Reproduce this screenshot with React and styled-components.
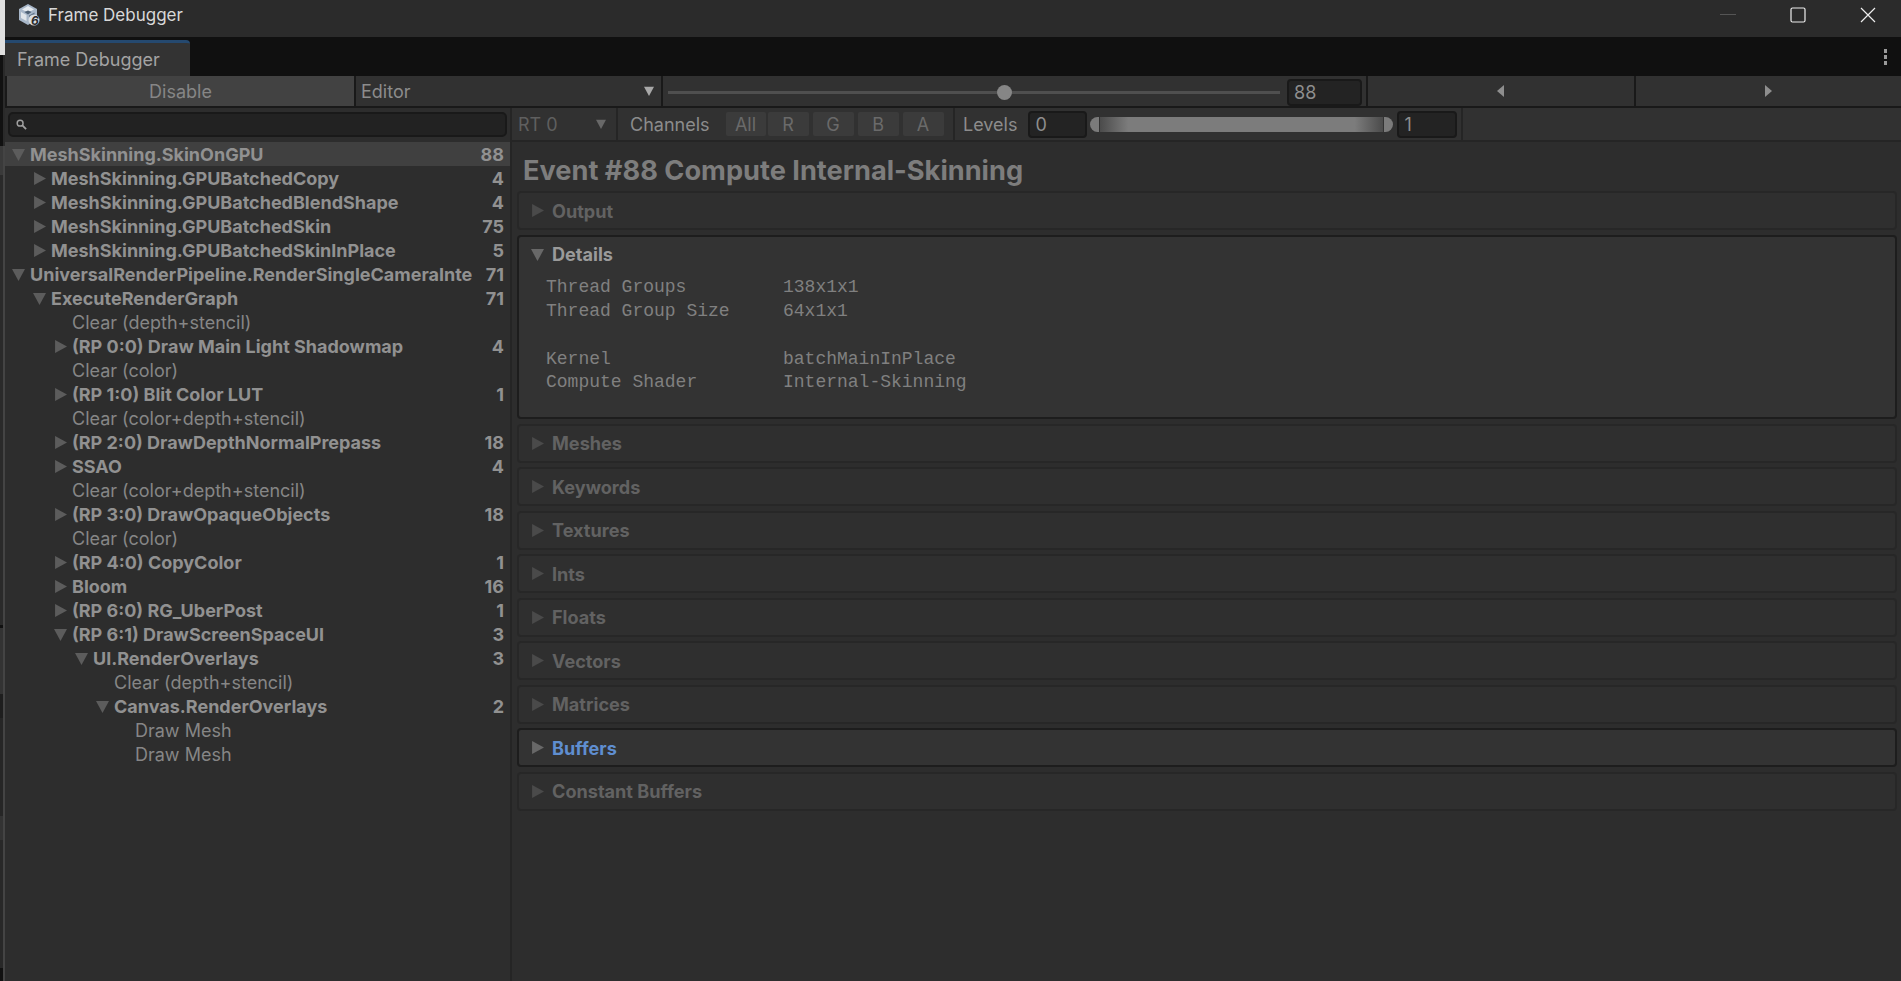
import React from 'react';
import styled, { createGlobalStyle } from 'styled-components';

const GlobalStyle = createGlobalStyle`
  html, body { margin: 0; padding: 0; background: #2d2d2d; }
  body { font-family: 'Inter', 'Liberation Sans', sans-serif; overflow: hidden; }
  * { box-sizing: border-box; }
`;

const Page = styled.div`
  width: 1901px;
  height: 981px;
  display: flex;
  overflow: hidden;
`;

const Gutter = styled.div`
  width: 5px;
  flex: none;
  display: flex;
  flex-direction: column;
`;

const GutterPatch = styled.div`
  height: ${p => p.$h}px;
  background: ${p => p.$c};
  border-right: 2px solid ${p => p.$edge || '#444444'};
`;

const Window = styled.div`
  flex: 1;
  display: flex;
  flex-direction: column;
  min-width: 0;
  background: #2d2d2d;
`;

const TitleBar = styled.div`
  height: 37px;
  flex: none;
  display: flex;
  align-items: center;
  padding: 0 0 7px 13px;
  background: #2b2b2b;
  color: #d8d8d8;
  font-size: 17px;
`;

const TitleText = styled.span`
  margin-left: 8px;
`;

const WinButtons = styled.div`
  margin-left: auto;
  display: flex;
  align-items: center;
  gap: 4px;
  height: 100%;
`;

const WinButton = styled.div`
  width: 66px;
  height: 100%;
  display: flex;
  align-items: center;
  justify-content: center;
`;

const TabBar = styled.div`
  height: 39px;
  flex: none;
  display: flex;
  align-items: flex-end;
  background: #101010;
`;

const Tab = styled.div`
  width: 185px;
  height: 36px;
  padding-left: 12px;
  display: flex;
  align-items: center;
  background: #333333;
  border-top: 3px solid #25496f;
  border-top-right-radius: 4px;
  color: #a3a3a3;
  font-size: 18px;
`;

const MenuDots = styled.div`
  margin: 0 14px 11px auto;
  display: flex;
  flex-direction: column;
  gap: 2px;
`;

const Dot = styled.span`
  width: 3px;
  height: 4px;
  background: #9a9a9a;
`;

const Toolbar = styled.div`
  height: 32px;
  flex: none;
  display: flex;
  background: #191919;
  padding-bottom: 2px;
`;

const DisableButton = styled.div`
  width: 347px;
  margin-left: 2px;
  display: flex;
  align-items: center;
  justify-content: center;
  background: #424242;
  color: #868686;
  font-size: 18px;
`;

const EditorSelect = styled.div`
  width: 305px;
  margin-left: 2px;
  padding: 0 7px 0 5px;
  display: flex;
  align-items: center;
  justify-content: space-between;
  background: #313131;
  color: #8c8c8c;
  font-size: 18px;
`;

const SliderCell = styled.div`
  width: 703px;
  margin-left: 2px;
  padding: 3px 4px 0 5px;
  display: flex;
  align-items: center;
  background: #313131;
`;

const Track = styled.div`
  flex: 1;
  height: 3px;
  position: relative;
  background: #4f4f4f;
`;

const Thumb = styled.div`
  position: absolute;
  top: -6px;
  left: 329px;
  width: 15px;
  height: 15px;
  border-radius: 50%;
  background: #868686;
`;

const NumberField = styled.div`
  width: ${p => p.$w}px;
  height: 27px;
  margin-left: ${p => p.$ml || 0}px;
  padding-left: 5px;
  flex: none;
  display: flex;
  align-items: center;
  background: #232323;
  border: 2px solid #191919;
  border-radius: 4px;
  color: #8e8e8e;
  font-size: 18px;
`;

const StepButton = styled.div`
  flex: ${p => (p.$w ? 'none' : 1)};
  width: ${p => (p.$w ? `${p.$w}px` : 'auto')};
  margin-left: 2px;
  display: flex;
  align-items: center;
  justify-content: center;
  background: #313131;
`;

const Body = styled.div`
  flex: 1;
  display: flex;
  min-height: 0;
`;

const LeftPane = styled.div`
  width: 507px;
  flex: none;
  display: flex;
  flex-direction: column;
  border-right: 2px solid #252525;
`;

const SearchRow = styled.div`
  height: 34px;
  flex: none;
  padding: 4px 3px 5px 3px;
`;

const SearchBox = styled.div`
  height: 100%;
  padding-left: 6px;
  display: flex;
  align-items: center;
  background: #222222;
  border: 2px solid #191919;
  border-radius: 5px;
`;

const TreeList = styled.div`
  display: flex;
  flex-direction: column;
`;

const TreeRow = styled.div`
  height: 24px;
  padding-left: ${p => 7 + p.$depth * 21}px;
  padding-right: 6px;
  display: flex;
  align-items: center;
  background: ${p => (p.$selected ? '#404040' : 'transparent')};
  color: ${p => (p.$group ? '#919191' : '#868686')};
  font-size: 18px;
  font-weight: ${p => (p.$group ? 700 : 400)};
  white-space: nowrap;
`;

const ArrowSlot = styled.span`
  width: 18px;
  flex: none;
  display: flex;
  align-items: center;
`;

const RowCount = styled.span`
  margin-left: auto;
  font-weight: 700;
`;

const RightPane = styled.div`
  flex: 1;
  min-width: 0;
  display: flex;
  flex-direction: column;
`;

const ChannelBar = styled.div`
  height: 34px;
  flex: none;
  display: flex;
  background: #313131;
  border-bottom: 2px solid #252525;
  color: #8c8c8c;
  font-size: 18px;
`;

const BarCell = styled.div`
  width: ${p => p.$w}px;
  flex: none;
  padding: ${p => p.$pad};
  display: flex;
  align-items: center;
  border-right: 2px solid #252525;
`;

const RtLabel = styled.span`
  flex: 1;
  color: #5f5f5f;
`;

const ChannelLabel = styled.span`
  margin-right: 16px;
`;

const ChannelButton = styled.div`
  width: 41px;
  height: 24px;
  margin-right: 4px;
  display: flex;
  align-items: center;
  justify-content: center;
  background: #3b3b3b;
  border-radius: 2px;
  color: #6a6a6a;

  &:first-of-type {
    width: 40px;
    margin-right: 2px;
  }
`;

const LevelsRamp = styled.div`
  width: 303px;
  height: 15px;
  margin: 0 4px 0 3px;
  flex: none;
  display: flex;
  align-items: center;
`;

const RampCap = styled.div`
  width: 9px;
  height: 100%;
  background: #7b7b7b;
  border-radius: ${p => (p.$right ? '0 8px 8px 0' : '8px 0 0 8px')};
`;

const RampBar = styled.div`
  flex: 1;
  height: 100%;
  background: linear-gradient(90deg, #4b4b4b 0%, #7c7c7c 10%, #7c7c7c 90%, #4b4b4b 100%);
  border-left: 1px solid #333;
  border-right: 1px solid #333;
`;

const EventTitle = styled.h1`
  margin: 0;
  height: 49px;
  flex: none;
  padding: 7px 0 0 11px;
  display: flex;
  align-items: center;
  color: #7d7d7d;
  font-size: 27.2px;
  font-weight: 700;
`;

const Sections = styled.div`
  padding: 0 4px 0 5px;
  display: flex;
  flex-direction: column;
  gap: 4.5px;
`;

const Section = styled.div`
  min-height: 39px;
  background: ${p => (p.$active ? '#333333' : '#2f2f2f')};
  border: 2px solid ${p => (p.$active ? '#1d1d1d' : '#272727')};
  border-radius: 4px;
`;

const SectionHead = styled.div`
  height: 35px;
  padding-left: 12px;
  display: flex;
  align-items: center;
  gap: 8px;
  color: ${p => (p.$blue ? '#5f8ed0' : p.$active ? '#9a9a9a' : '#626262')};
  font-size: 18.1px;
  font-weight: 700;
`;

const DetailGrid = styled.div`
  padding: 4px 0 23px 27px;
  display: grid;
  grid-template-columns: 237px 1fr;
  grid-auto-rows: 23.75px;
  align-items: center;
  color: #808080;
  font-family: 'Liberation Mono', 'DejaVu Sans Mono', monospace;
  font-size: 18px;
`;

const Arrow = ({ dir, color = '#5c5c5c', size = 13 }) => {
  const points = {
    right: '1,0 12,6 1,12',
    left: '11,0 0,6 11,12',
    down: '0,1 12,1 6,12',
    prev: '9,0 2,6 9,12',
    next: '2,0 9,6 2,12',
  }[dir];
  return (
    <svg width={size} height={size} viewBox="0 0 12 12">
      <polygon points={points} fill={color} />
    </svg>
  );
};

const UnityIcon = () => (
  <svg width="22" height="22" viewBox="0 0 22 22">
    <polygon points="10,0 19,5 19,15 10,21 1,16 1,5" fill="#a7b6c8" />
    <polygon points="10,2 16,5.5 10,8.5 4,5.5" fill="#e6ebf0" />
    <polygon points="3,8 8.5,11 8.5,17 3,14" fill="#e0e5ea" />
    <polygon points="6.5,8 10,6.5 13.5,8 10,10.5" fill="#4d5f73" />
    <polygon points="11,11.5 16.5,8.5 16.5,12 11,15" fill="#5e7288" />
    <circle cx="16" cy="16" r="5.5" fill="#d9dee3" />
    <text x="13" y="20.5" fontFamily="Inter" fontSize="12" fontWeight="700" fontStyle="italic" fill="#2b2b2b">6</text>
  </svg>
);

const SearchIcon = () => (
  <svg width="11" height="11" viewBox="0 0 12 12" fill="none" stroke="#a0a0a0" strokeWidth="1.6">
    <circle cx="4.5" cy="4.5" r="3.2" />
    <line x1="7" y1="7" x2="11" y2="11" strokeWidth="2" />
  </svg>
);

const gutter = [
  [55, '#e0e0e0', '#e0e0e0'],
  [91, '#111111', '#2a2a2a'],
  [29, '#3a3a3a'],
  [450, '#2a2a2a'],
  [3, '#111111'],
  [66, '#333333'],
  [24, '#1e1e1e'],
  [98, '#262626'],
  [24, '#333333'],
  [128, '#282828'],
  [13, '#111111'],
];

const tree = [
  { d: 0, a: 'down', t: 'MeshSkinning.SkinOnGPU', n: 88, selected: true },
  { d: 1, a: 'right', t: 'MeshSkinning.GPUBatchedCopy', n: 4 },
  { d: 1, a: 'right', t: 'MeshSkinning.GPUBatchedBlendShape', n: 4 },
  { d: 1, a: 'right', t: 'MeshSkinning.GPUBatchedSkin', n: 75 },
  { d: 1, a: 'right', t: 'MeshSkinning.GPUBatchedSkinInPlace', n: 5 },
  { d: 0, a: 'down', t: 'UniversalRenderPipeline.RenderSingleCameraInte', n: 71 },
  { d: 1, a: 'down', t: 'ExecuteRenderGraph', n: 71 },
  { d: 2, t: 'Clear (depth+stencil)' },
  { d: 2, a: 'right', t: '(RP 0:0) Draw Main Light Shadowmap', n: 4 },
  { d: 2, t: 'Clear (color)' },
  { d: 2, a: 'right', t: '(RP 1:0) Blit Color LUT', n: 1 },
  { d: 2, t: 'Clear (color+depth+stencil)' },
  { d: 2, a: 'right', t: '(RP 2:0) DrawDepthNormalPrepass', n: 18 },
  { d: 2, a: 'right', t: 'SSAO', n: 4 },
  { d: 2, t: 'Clear (color+depth+stencil)' },
  { d: 2, a: 'right', t: '(RP 3:0) DrawOpaqueObjects', n: 18 },
  { d: 2, t: 'Clear (color)' },
  { d: 2, a: 'right', t: '(RP 4:0) CopyColor', n: 1 },
  { d: 2, a: 'right', t: 'Bloom', n: 16 },
  { d: 2, a: 'right', t: '(RP 6:0) RG_UberPost', n: 1 },
  { d: 2, a: 'down', t: '(RP 6:1) DrawScreenSpaceUI', n: 3 },
  { d: 3, a: 'down', t: 'UI.RenderOverlays', n: 3 },
  { d: 4, t: 'Clear (depth+stencil)' },
  { d: 4, a: 'down', t: 'Canvas.RenderOverlays', n: 2 },
  { d: 5, t: 'Draw Mesh' },
  { d: 5, t: 'Draw Mesh' },
];

const details = [
  ['Thread Groups', '138x1x1'],
  ['Thread Group Size', '64x1x1'],
  ['\u00a0', ''],
  ['Kernel', 'batchMainInPlace'],
  ['Compute Shader', 'Internal-Skinning'],
];

const sections = ['Output', 'Details', 'Meshes', 'Keywords', 'Textures', 'Ints', 'Floats', 'Vectors', 'Matrices', 'Buffers', 'Constant Buffers'];

const App = () => (
  <Page>
    <GlobalStyle />
    <Gutter>
      {gutter.map(([h, c, edge], i) => (
        <GutterPatch key={i} $h={h} $c={c} $edge={edge} />
      ))}
    </Gutter>
    <Window>
      <TitleBar>
        <UnityIcon />
        <TitleText>Frame Debugger</TitleText>
        <WinButtons>
          <WinButton>
            <svg width="16" height="2"><rect width="16" height="1" fill="#555" /></svg>
          </WinButton>
          <WinButton>
            <svg width="16" height="16" fill="none" stroke="#eee" strokeWidth="1.2"><rect x="1" y="1" width="14" height="14" rx="1.5" /></svg>
          </WinButton>
          <WinButton>
            <svg width="16" height="16" stroke="#eee" strokeWidth="1.2"><path d="M1 1L15 15M15 1L1 15" /></svg>
          </WinButton>
        </WinButtons>
      </TitleBar>
      <TabBar>
        <Tab>Frame Debugger</Tab>
        <MenuDots><Dot /><Dot /><Dot /></MenuDots>
      </TabBar>
      <Toolbar>
        <DisableButton>Disable</DisableButton>
        <EditorSelect>Editor<Arrow dir="down" color="#a8a8a8" size={10} /></EditorSelect>
        <SliderCell>
          <Track><Thumb /></Track>
          <NumberField $w={75} $ml={7}>88</NumberField>
        </SliderCell>
        <StepButton $w={266}><Arrow dir="prev" color="#8e8e8e" size={12} /></StepButton>
        <StepButton><Arrow dir="next" color="#8e8e8e" size={12} /></StepButton>
      </Toolbar>
      <Body>
        <LeftPane>
          <SearchRow>
            <SearchBox><SearchIcon /></SearchBox>
          </SearchRow>
          <TreeList>
            {tree.map((row, i) => (
              <TreeRow key={i} $depth={row.d} $group={!!row.a} $selected={row.selected}>
                <ArrowSlot>{row.a && <Arrow dir={row.a} />}</ArrowSlot>
                {row.t}
                {row.n !== undefined && <RowCount>{row.n}</RowCount>}
              </TreeRow>
            ))}
          </TreeList>
        </LeftPane>
        <RightPane>
          <ChannelBar>
            <BarCell $w={106} $pad="0 10px 0 6px">
              <RtLabel>RT 0</RtLabel>
              <Arrow dir="down" color="#686868" size={10} />
            </BarCell>
            <BarCell $w={337} $pad="0 0 0 12px">
              <ChannelLabel>Channels</ChannelLabel>
              <ChannelButton>All</ChannelButton>
              <ChannelButton>R</ChannelButton>
              <ChannelButton>G</ChannelButton>
              <ChannelButton>B</ChannelButton>
              <ChannelButton>A</ChannelButton>
            </BarCell>
            <BarCell $w={508} $pad="0 0 0 8px">
              Levels
              <NumberField $w={59} $ml={11}>0</NumberField>
              <LevelsRamp>
                <RampCap />
                <RampBar />
                <RampCap $right />
              </LevelsRamp>
              <NumberField $w={60}>1</NumberField>
            </BarCell>
          </ChannelBar>
          <EventTitle>Event #88 Compute Internal-Skinning</EventTitle>
          <Sections>
            {sections.map(name => {
              const open = name === 'Details';
              const blue = name === 'Buffers';
              const active = open || blue;
              return (
                <Section key={name} $active={active}>
                  <SectionHead $active={active} $blue={blue}>
                    <Arrow dir={open ? 'down' : 'right'} color={active ? '#686868' : '#4a4a4a'} />
                    {name}
                  </SectionHead>
                  {open && (
                    <DetailGrid>
                      {details.map(([k, v]) => (
                        <React.Fragment key={k}>
                          <span>{k}</span>
                          <span>{v}</span>
                        </React.Fragment>
                      ))}
                    </DetailGrid>
                  )}
                </Section>
              );
            })}
          </Sections>
        </RightPane>
      </Body>
    </Window>
  </Page>
);

export default App;
